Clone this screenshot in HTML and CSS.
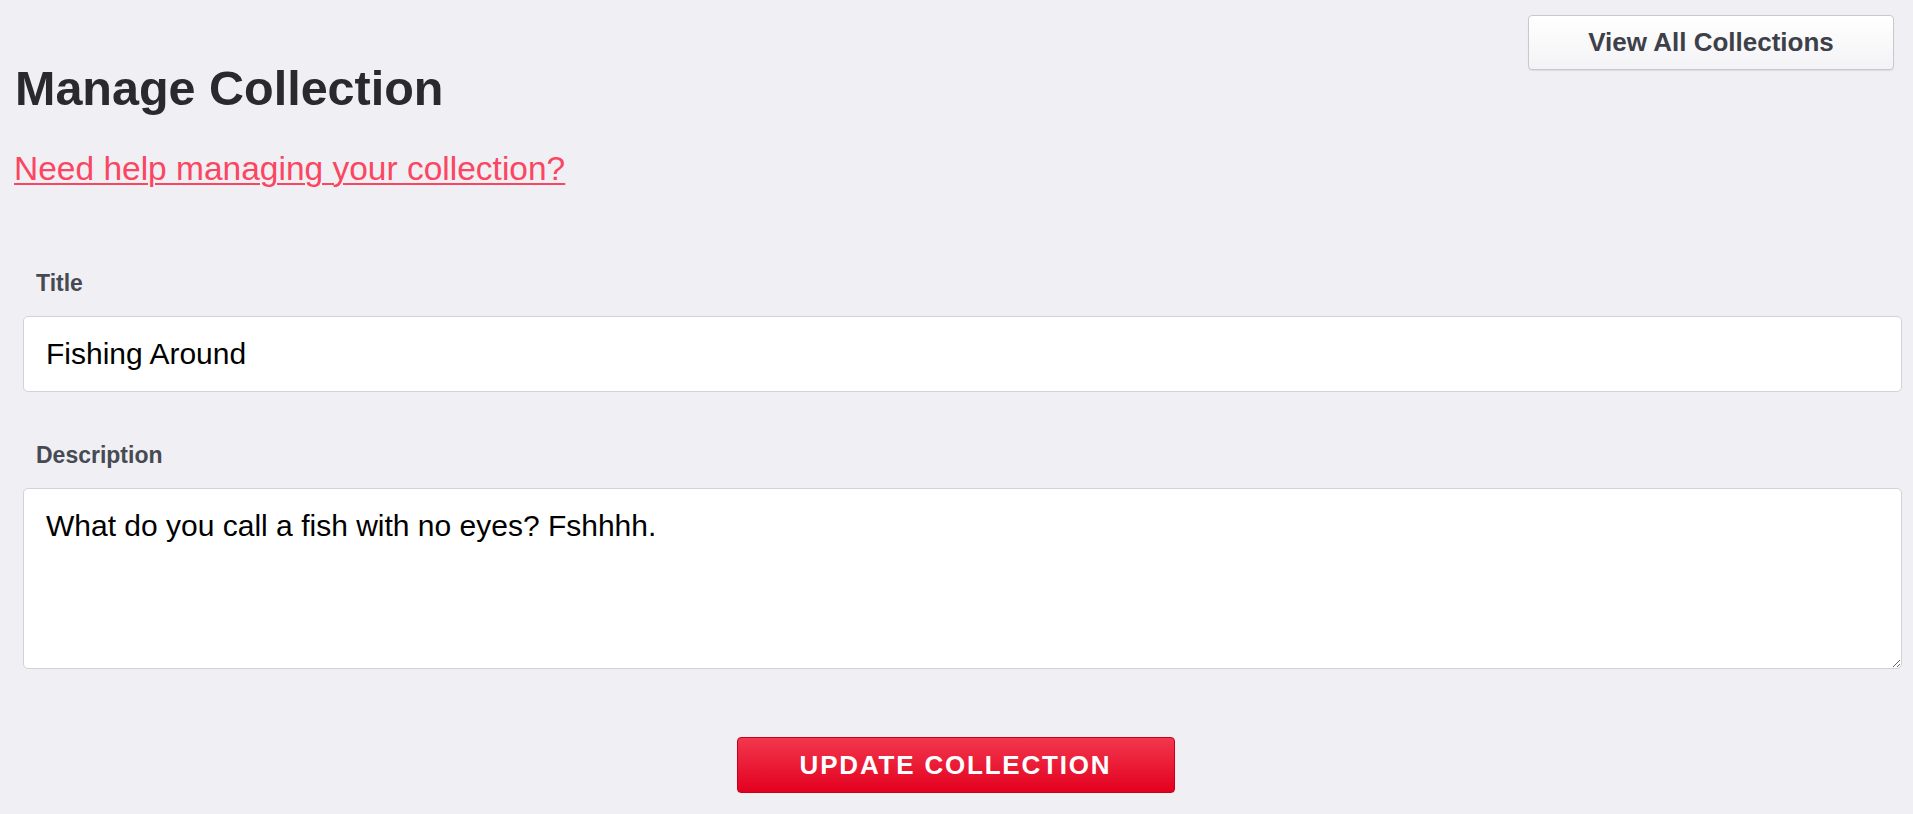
FILE: index.html
```html
<!DOCTYPE html>
<html lang="en">
<head>
<meta charset="utf-8">
<title>Manage Collection</title>
<link rel="stylesheet" href="styles.css">
</head>
<body>
<div class="page">
  <header class="page-head">
    <h1 class="page-title">Manage Collection</h1>
    <a class="btn-secondary" href="#">View All Collections</a>
  </header>
  <p class="help"><a class="help-link" href="#">Need help managing your collection?</a></p>
  <form class="form">
    <div class="field">
      <label class="field-label" for="title">Title</label>
      <input class="field-input" id="title" type="text" value="Fishing Around">
    </div>
    <div class="field field-desc">
      <label class="field-label" for="desc">Description</label>
      <textarea class="field-input field-textarea" id="desc">What do you call a fish with no eyes? Fshhhh.</textarea>
    </div>
    <div class="actions">
      <button class="btn-primary" type="button">UPDATE COLLECTION</button>
    </div>
  </form>
</div>
</body>
</html>
```

FILE: styles.css
```css
* { box-sizing: border-box; }

html, body {
  margin: 0;
  background: #efeff4;
}

body {
  font-family: "Liberation Sans", Arial, Helvetica, sans-serif;
  color: #2a2a2e;
}

.page {
  padding: 15px 11px 0 15px;
}

.page-head {
  display: flex;
  justify-content: space-between;
  align-items: flex-start;
}

.page-title {
  margin: 46px 0 0;
  font-size: 48.5px;
  line-height: 55px;
  font-weight: 700;
  color: #2a2a2e;
}

.btn-secondary {
  display: flex;
  align-items: center;
  justify-content: center;
  width: 366px;
  height: 55px;
  margin-right: 8px;
  border: 1px solid #c9c9cd;
  border-radius: 4px;
  background: linear-gradient(#ffffff, #f3f3f6);
  box-shadow: 0 1px 1px rgba(0, 0, 0, 0.08);
  font-size: 26px;
  font-weight: 700;
  color: #3d4049;
  text-decoration: none;
}

.help {
  margin: 34px 0 0 -1px;
  font-size: 33.5px;
  line-height: 38px;
}

.help-link {
  color: #fb4662;
  text-decoration: underline;
  text-decoration-thickness: 2px;
  text-underline-offset: 3px;
}

.form {
  margin-top: 82px;
}

.field {
  margin-left: 8px;
}

.field-desc {
  margin-top: 50px;
}

.field-label {
  display: block;
  padding-left: 13px;
  margin-bottom: 20px;
  font-size: 23px;
  line-height: 26px;
  font-weight: 700;
  color: #474a52;
}

.field-input {
  display: block;
  width: 100%;
  margin: 0;
  padding: 20px 22px;
  border: 1px solid #cfd3d8;
  border-radius: 5px;
  background: #ffffff;
  font-family: "Liberation Sans", Arial, Helvetica, sans-serif;
  font-size: 30px;
  line-height: 34px;
  color: #000000;
  outline: none;
}

.field-textarea {
  height: 181px;
  resize: vertical;
}

.actions {
  display: flex;
  justify-content: center;
  margin-top: 68px;
  padding-right: 6px;
}

.btn-primary {
  width: 438px;
  height: 56px;
  border: 1px solid #c8001b;
  border-radius: 4px;
  background: linear-gradient(#f2374d, #e3001f);
  box-shadow: 0 1px 1px rgba(0, 0, 0, 0.08);
  color: #ffffff;
  font-family: "Liberation Sans", Arial, Helvetica, sans-serif;
  font-size: 26px;
  font-weight: 700;
  letter-spacing: 1.8px;
  cursor: pointer;
}
```
